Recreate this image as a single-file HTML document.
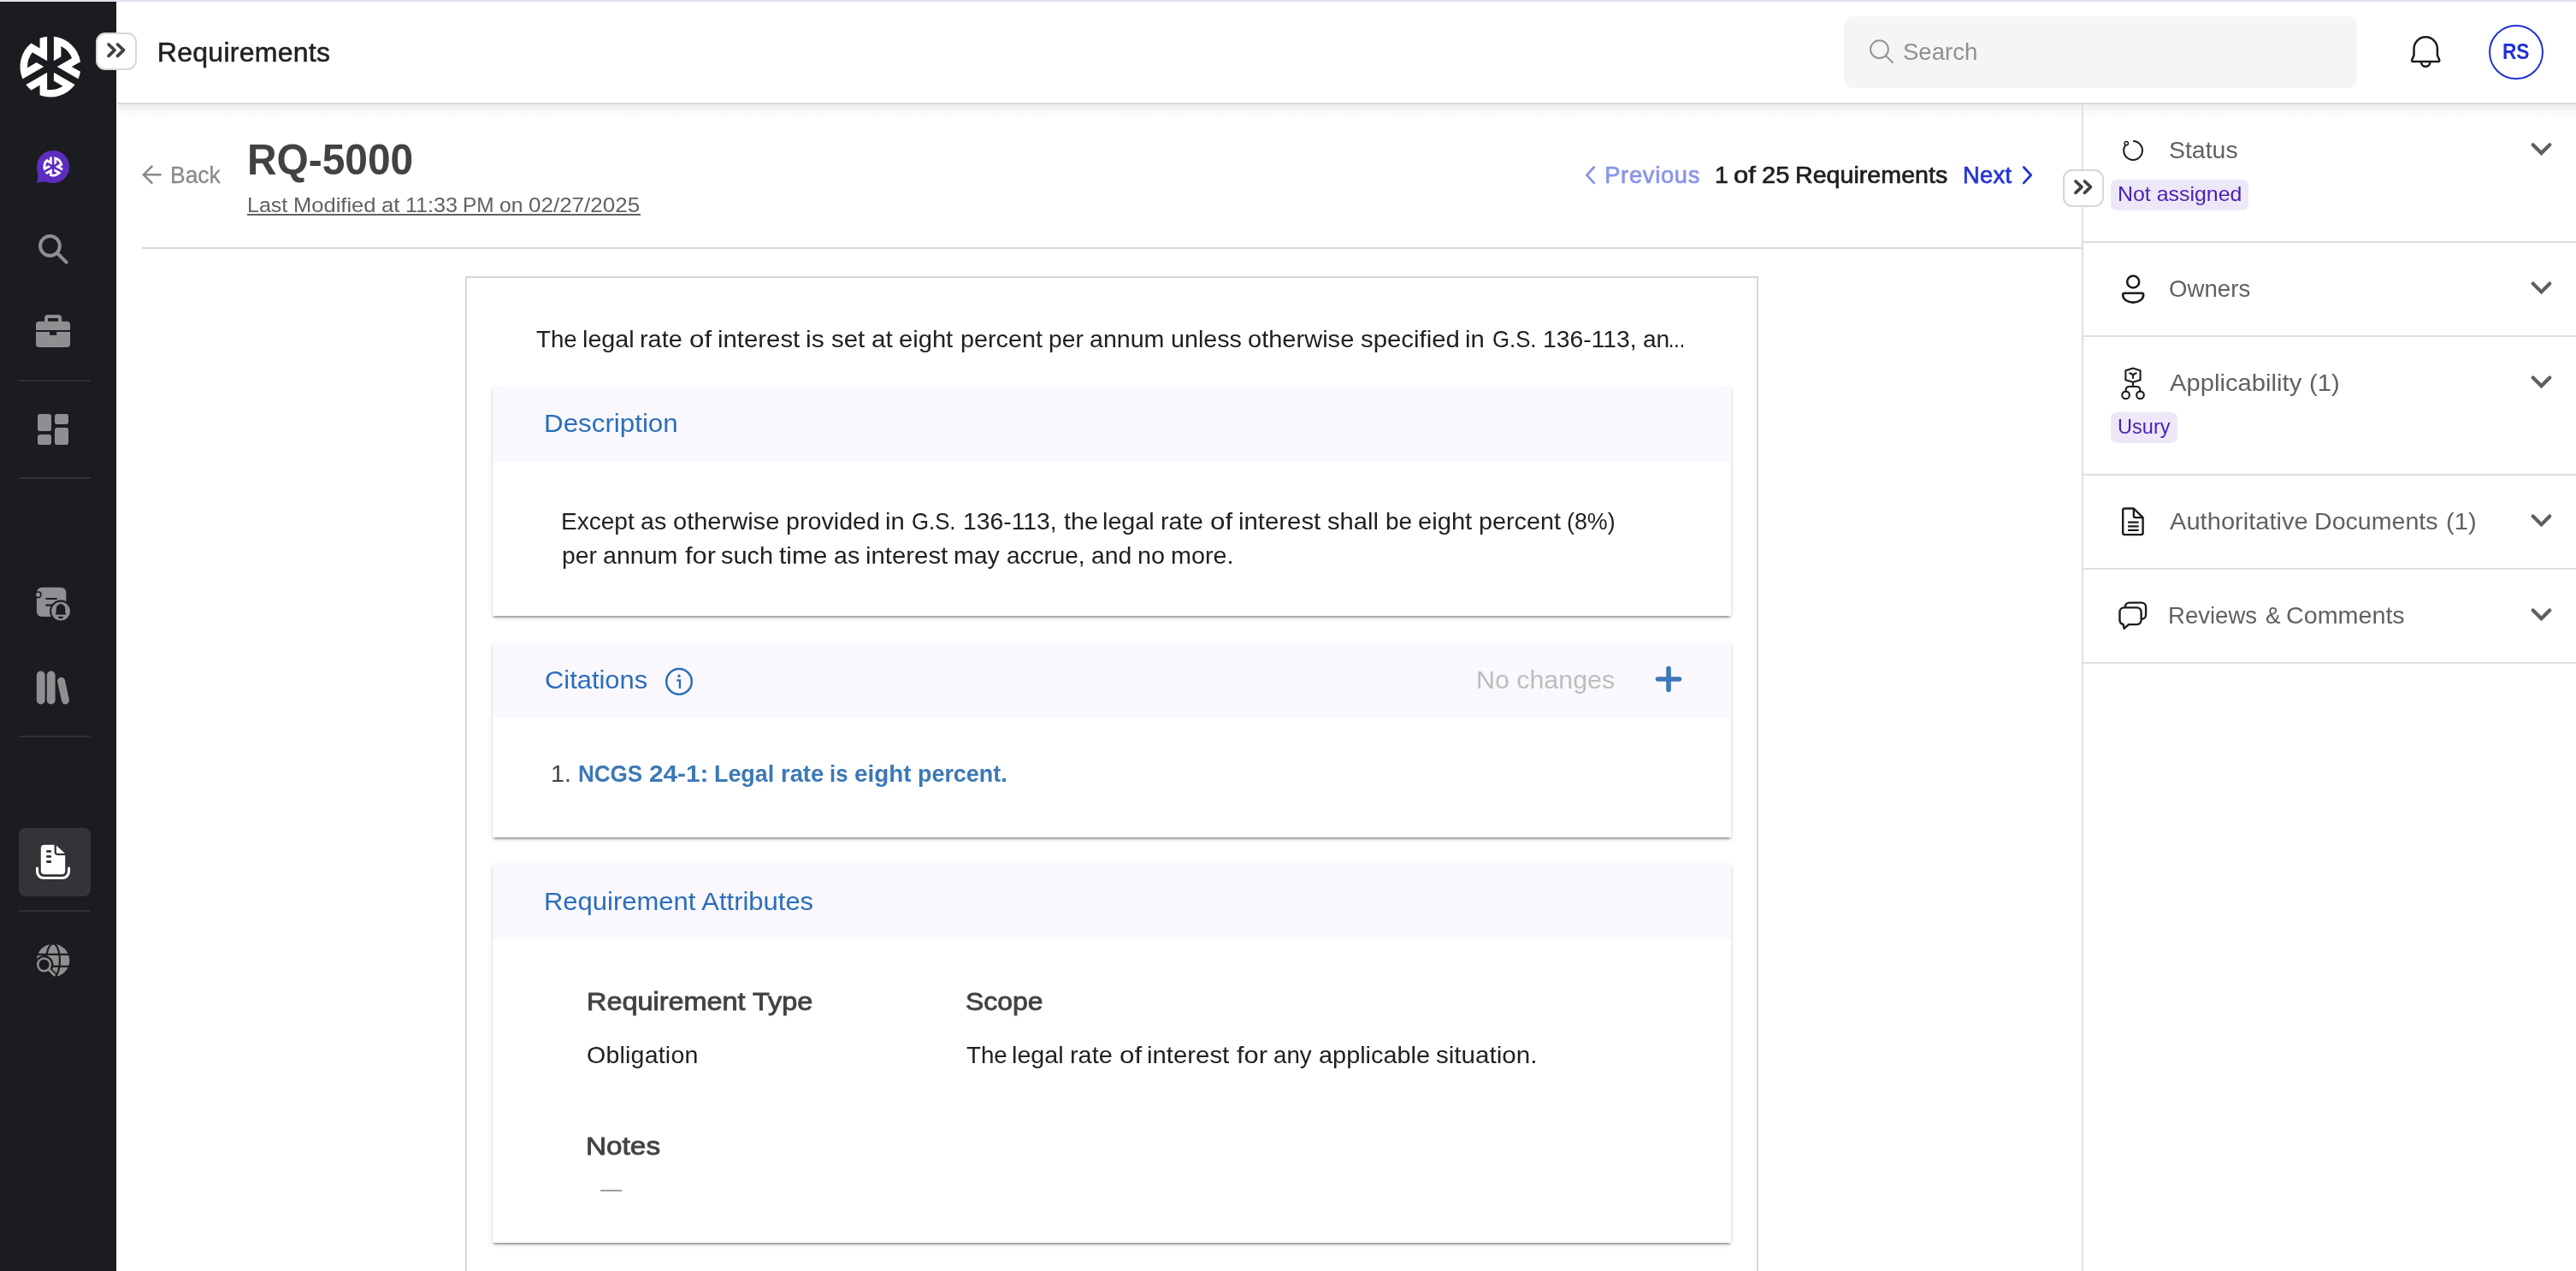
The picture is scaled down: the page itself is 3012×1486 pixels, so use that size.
<!DOCTYPE html>
<html lang="en">
<head>
<meta charset="utf-8">
<title>Requirements</title>
<style>
*{box-sizing:border-box;margin:0;padding:0}
html,body{width:3012px;height:1486px;overflow:hidden;background:#fff}
body{position:relative;font-family:"Liberation Sans",sans-serif;color:#212121}
.abs{position:absolute}
#texts{position:absolute;left:0;top:0;width:3012px;height:1486px;will-change:transform}
.t{position:absolute;white-space:nowrap;line-height:1}
.m{-webkit-text-stroke:0.55px currentColor}
svg{position:absolute;overflow:visible}
#strip{left:0;top:0;width:3012px;height:2px;background:#e4dfee}
#side{left:0;top:2px;width:136px;height:1484px;background:#1b1c1f;border-right:1px solid #131416}
#hdrline{left:137px;top:120px;width:2875px;height:2px;background:#d9d9d9}
#hdrshadow{left:137px;top:122px;width:2875px;height:18px;background:linear-gradient(to bottom,rgba(0,0,0,.07),rgba(0,0,0,.025) 45%,rgba(0,0,0,0))}
.sdiv{left:22px;width:84px;height:2px;background:#2f3033}
#active{left:22px;top:968px;width:84px;height:80px;border-radius:8px;background:#333437}
.btn{background:#fff;border:2px solid #d6d6d6;border-radius:11px}
#search{left:2156px;top:19px;width:600px;height:84px;background:#f5f5f5;border-radius:12px}
#avatar{left:2910px;top:29px;width:64px;height:64px;border:2px solid #2231d6;border-radius:50%}
#subdiv{left:166px;top:289px;width:2268px;height:2px;background:#d8d8d8}
#pborder{left:2434px;top:122px;width:2px;height:1364px;background:#e0e0e0}
.pdiv{left:2436px;width:576px;height:2px;background:#dedede}
#outer{left:544px;top:323px;width:1512px;height:1200px;border:2px solid #d6d6d6;background:#fff}
.card{left:576px;width:1448px;background:#fff;box-shadow:0 4px 2px -2px rgba(0,0,0,.2),0 2px 2px 0 rgba(0,0,0,.14),0 2px 6px 0 rgba(0,0,0,.12)}
.chead{position:absolute;left:0;top:0;width:100%;height:87px;background:#faf8fd}
.chip{background:#ede8f7;border-radius:7px}
#lmline{left:289.4px;top:250px;width:459.6px;height:2px;background:#616161}
#dash{left:702px;top:1391px;width:25px;height:2px;background:#9e9e9e}
</style>
</head>
<body>
<div id="strip" class="abs"></div>
<div id="side" class="abs"></div>
<div id="hdrshadow" class="abs"></div>
<div id="hdrline" class="abs"></div>

<!-- ===== sidebar ===== -->
<svg style="left:58.6px;top:78px" width="1" height="1"><g fill="#fff"><path d="M3.90 -35.28A35.50 35.50 0 0 1 35.01 -5.87L24.85 0.00L35.01 5.87A35.50 35.50 0 0 1 32.51 14.26L7.81 0.00L25.07 -9.97A26.98 26.98 0 0 0 12.42 -23.95L12.42 -11.68L3.90 -6.76Z"/><path d="M3.90 -35.28A35.50 35.50 0 0 1 35.01 -5.87L24.85 0.00L35.01 5.87A35.50 35.50 0 0 1 32.51 14.26L7.81 0.00L25.07 -9.97A26.98 26.98 0 0 0 12.42 -23.95L12.42 -11.68L3.90 -6.76Z" transform="rotate(120)"/><path d="M3.90 -35.28A35.50 35.50 0 0 1 35.01 -5.87L24.85 0.00L35.01 5.87A35.50 35.50 0 0 1 32.51 14.26L7.81 0.00L25.07 -9.97A26.98 26.98 0 0 0 12.42 -23.95L12.42 -11.68L3.90 -6.76Z" transform="rotate(240)"/></g></svg>
<svg style="left:0;top:0" width="136" height="1486" viewBox="0 0 136 1486">
 <!-- chat bubble -->
 <circle cx="62.05" cy="195" r="19.1" fill="#5c2dbf"/><path d="M43.1 196Q45.2 206 42.9 214.4Q49.5 211.3 58 213.6L58 200z" fill="#5c2dbf"/>
 <g transform="translate(62.05 194.9)" fill="#fff"><path d="M1.29 -11.63A11.70 11.70 0 0 1 11.54 -1.93L8.19 0.00L11.54 1.93A11.70 11.70 0 0 1 10.71 4.70L2.57 0.00L8.26 -3.28A8.89 8.89 0 0 0 4.09 -7.89L4.09 -3.85L1.29 -2.23Z"/><path d="M1.29 -11.63A11.70 11.70 0 0 1 11.54 -1.93L8.19 0.00L11.54 1.93A11.70 11.70 0 0 1 10.71 4.70L2.57 0.00L8.26 -3.28A8.89 8.89 0 0 0 4.09 -7.89L4.09 -3.85L1.29 -2.23Z" transform="rotate(120)"/><path d="M1.29 -11.63A11.70 11.70 0 0 1 11.54 -1.93L8.19 0.00L11.54 1.93A11.70 11.70 0 0 1 10.71 4.70L2.57 0.00L8.26 -3.28A8.89 8.89 0 0 0 4.09 -7.89L4.09 -3.85L1.29 -2.23Z" transform="rotate(240)"/></g>
 <!-- search -->
 <g fill="none" stroke="#8e8f91" stroke-width="4" stroke-linecap="round"><circle cx="58.45" cy="287.5" r="11.4"/><path d="M67 296L77.6 306.6"/></g>
 <!-- briefcase -->
 <rect x="54.03" y="369.95" width="16.1" height="10" rx="2" fill="none" stroke="#8e8f91" stroke-width="4"/><rect x="42" y="375.8" width="40.05" height="30.3" rx="4" fill="#8e8f91"/>
 <path d="M42 387h40.1" stroke="#1b1c1f" stroke-width="1.8"/><rect x="58.1" y="387" width="8" height="4.9" fill="#1b1c1f"/>
 <!-- dashboard -->
 <g fill="#8e8f91"><rect x="44" y="484" width="16" height="20" rx="2.8"/><rect x="64" y="484" width="16" height="12" rx="2.8"/><rect x="44" y="508" width="16" height="12" rx="2.8"/><rect x="64" y="500" width="16" height="20" rx="2.8"/></g>
 <!-- scroll + bell -->
 <rect x="42.9" y="686.8" width="34.5" height="34.1" rx="6" fill="#8e8f91"/>
 <circle cx="44.6" cy="695.3" r="4.1" fill="#1b1c1f"/><circle cx="44.6" cy="695.3" r="2.5" fill="#8e8f91"/>
 <path d="M54.3 700h11.6M54.3 707.7h6" stroke="#1b1c1f" stroke-width="2.2" stroke-linecap="round"/>
 <circle cx="71" cy="714.6" r="13" fill="#1b1c1f"/><circle cx="71" cy="714.6" r="10.9" fill="#8e8f91"/>
 <path d="M66 717.4v-5.8a5 5 0 0 1 10 0v5.8h1v0.9H65v-0.9z" fill="#1b1c1f" stroke="#1b1c1f" stroke-width="0.6" stroke-linejoin="round"/>
 <path d="M67.900 720.700h6.200a3.100 2.500 0 0 1-6.200 0z" fill="#1b1c1f"/>
 <!-- books -->
 <g fill="#8e8f91"><rect x="42.8" y="784.6" width="9.8" height="38.8" rx="4.9"/><rect x="54.8" y="784.6" width="9.8" height="38.8" rx="4.9"/></g>
 <path d="M71.6 796.3L76.5 818.9" stroke="#8e8f91" stroke-width="9" stroke-linecap="round"/>
</svg>
<div class="abs sdiv" style="top:444px"></div>
<div class="abs sdiv" style="top:558px"></div>
<div class="abs sdiv" style="top:860px"></div>
<div class="abs sdiv" style="top:1064px"></div>
<div id="active" class="abs"></div>
<svg style="left:0;top:0" width="136" height="1486" viewBox="0 0 136 1486">
 <!-- active doc icon -->
 <path d="M51.8 987.7H63.6V996.1a4 4 0 0 0 4 4H76.2V1018.2a4 4 0 0 1-4 4H51.8a4 4 0 0 1-4-4V991.7a4 4 0 0 1 4-4z" fill="#fff"/>
 <path d="M65.9 988.4L75.9 997.8H67.4a1.5 1.5 0 0 1-1.5-1.5z" fill="#fff"/>
 <path d="M55.4 995.4h3.4M55.4 1001.4h3.4M55.4 1007.5h3.4" stroke="#333437" stroke-width="2.8" stroke-linecap="round"/>
 <path d="M43.5 1015v4a7.500 7.500 0 0 0 7.500 7.500h22a7.500 7.500 0 0 0 7.500-7.500v-4" fill="none" stroke="#fff" stroke-width="3.1" stroke-linecap="round"/>
 <!-- globe search -->
 <circle cx="62" cy="1122.9" r="19.2" fill="#8e8f91"/>
 <g fill="none" stroke="#1b1c1f" stroke-width="2.2"><path d="M42 1115.8h40M42 1129.8h40"/><ellipse cx="62" cy="1122.9" rx="8" ry="19.6"/></g>
 <path d="M51.5 1128L66 1142.5V1147H40V1128z" fill="#1b1c1f"/><circle cx="51.5" cy="1127.9" r="10.9" fill="#1b1c1f"/>
 <path d="M57 1133.5L63.8 1140.3" stroke="#1b1c1f" stroke-width="6.4" stroke-linecap="round"/>
 <circle cx="51.5" cy="1127.9" r="7.3" fill="none" stroke="#8e8f91" stroke-width="2.5"/>
 <path d="M56.9 1133.4L63.4 1139.9" stroke="#8e8f91" stroke-width="2.9" stroke-linecap="round"/>
</svg>

<!-- ===== header ===== -->
<div class="abs btn" style="left:112px;top:38px;width:48px;height:44px"></div>
<div id="search" class="abs"></div>
<div id="avatar" class="abs"></div>
<svg style="left:0;top:0" width="3012" height="130" viewBox="0 0 3012 130">
 <path d="M127 52l7 6.7-7 6.7M137.5 52l7 6.7-7 6.7" fill="none" stroke="#424242" stroke-width="3.7" stroke-linecap="round" stroke-linejoin="round"/>
 <g fill="none" stroke="#949494" stroke-width="2"><circle cx="2197.5" cy="57.7" r="10.4"/><path d="M2205 65.3L2213.6 73.8"/></g>
 <path d="M2822.500 64.500V57a13.700 13.700 0 0 1 27.400 0v7.500l2.300 5.500a1.400 1.400 0 0 1-1.200 2H2821.400a1.400 1.400 0 0 1-1.200-2z" fill="none" stroke="#1c1c1c" stroke-width="2.5" stroke-linejoin="round"/>
 <path d="M2831 72.600a5.200 5.200 0 0 0 10.400 0" fill="none" stroke="#1c1c1c" stroke-width="2.5"/>
</svg>

<!-- ===== sub header ===== -->
<svg style="left:0;top:120px" width="2440" height="180" viewBox="0 120 2440 180">
 <path d="M178.260 193.800L167.800 204.250L178.260 214.700" fill="none" stroke="#888" stroke-width="2.500" stroke-linejoin="miter"/><path d="M168.500 204.250H187.500" fill="none" stroke="#888" stroke-width="2.500" stroke-linecap="round"/>
 <path d="M1863.8 195.5l-8.4 9.2 8.4 9.2" fill="none" stroke="#8a94e8" stroke-width="2.8" stroke-linecap="round" stroke-linejoin="round"/>
 <path d="M2366.3 195.5l8.4 9.2-8.4 9.2" fill="none" stroke="#2536d6" stroke-width="2.8" stroke-linecap="round" stroke-linejoin="round"/>
</svg>
<div id="subdiv" class="abs"></div>
<div id="lmline" class="abs"></div>

<!-- ===== main ===== -->
<div id="outer" class="abs"></div>
<div class="abs card" style="top:453px;height:267px"><div class="chead"></div></div>
<div class="abs card" style="top:752px;height:227px"><div class="chead"></div></div>
<div class="abs card" style="top:1011px;height:442px"><div class="chead"></div></div>
<svg style="left:0;top:760px" width="2100" height="80" viewBox="0 760 2100 80">
 <circle cx="794" cy="796.9" r="14.8" fill="none" stroke="#2a6ebb" stroke-width="2.5"/>
 <circle cx="794" cy="790.3" r="1.7" fill="#2a6ebb"/>
 <path d="M791.2 795.3h3.7v9.8" fill="none" stroke="#2a6ebb" stroke-width="2.3"/>
 <path d="M1951 781.5v25M1938.5 794h25" stroke="#3d78b8" stroke-width="5.6" stroke-linecap="round"/>
</svg>
<div id="dash" class="abs"></div>

<!-- ===== right panel ===== -->
<div id="pborder" class="abs"></div>
<div class="abs pdiv" style="top:282px"></div>
<div class="abs pdiv" style="top:392px"></div>
<div class="abs pdiv" style="top:554px"></div>
<div class="abs pdiv" style="top:664px"></div>
<div class="abs pdiv" style="top:774px"></div>
<div class="abs btn" style="left:2412px;top:198px;width:48px;height:44px"></div>
<div class="abs chip" style="left:2468px;top:210px;width:161px;height:36px"></div>
<div class="abs chip" style="left:2468px;top:482px;width:78px;height:36px"></div>
<svg style="left:2400px;top:120px" width="612" height="700" viewBox="2400 120 612 700">
 <path d="M2427 212l7 6.7-7 6.7M2437.5 212l7 6.7-7 6.7" fill="none" stroke="#424242" stroke-width="3.7" stroke-linecap="round" stroke-linejoin="round"/>
 <!-- status -->
 <path d="M2494.1 165.1a10.9 10.9 0 1 1 -8.6 4.2" fill="none" stroke="#1c1c1c" stroke-width="2"/>
 <circle cx="2486.3" cy="167.6" r="2.2" fill="none" stroke="#1c1c1c" stroke-width="1.5"/>
 <!-- owners -->
 <circle cx="2494.2" cy="329.5" r="7" fill="none" stroke="#1c1c1c" stroke-width="2.6"/>
 <path d="M2484.2 342.8h20a2 2 0 0 1 2 2c0 5-5 8.8-12 8.8s-12-3.800-12-8.800a2 2 0 0 1 2-2z" fill="none" stroke="#1c1c1c" stroke-width="2.6"/>
 <!-- applicability -->
 <g fill="none" stroke="#1c1c1c" stroke-width="2.1" stroke-linejoin="round" stroke-linecap="round">
  <path d="M2494 430.6l8.600 2.600v11l-8.600 2.600-8.600-2.600v-11z"/>
  <path d="M2490.300 436.400q1.900 0 3.700 2.200 1.800-2.200 3.700-2.200M2494 438.600v3.400"/>
  <path d="M2494 447v5M2485.700 457.300v-1.800a3.500 3.500 0 0 1 3.500-3.500h9.600a3.500 3.500 0 0 1 3.500 3.500v1.800"/>
  <circle cx="2485.600" cy="461.900" r="4.300"/><circle cx="2502.500" cy="461.900" r="4.300"/>
 </g>
 <!-- doc -->
 <g fill="none" stroke="#1c1c1c" stroke-width="2.4" stroke-linejoin="round">
  <path d="M2484.200 594.500h10.700l10.700 10.600v18a2 2 0 0 1-2 2h-19.400a2 2 0 0 1-2-2v-26.600a2 2 0 0 1 2-2z"/>
  <path d="M2494.900 594.500v8.600a2 2 0 0 0 2 2h8.700"/>
  <path d="M2488 610.600h12.600M2488 615.300h12.600M2488 619.900h12.600" stroke-width="2.200"/>
 </g>
 <!-- comments -->
 <g fill="#fff" stroke="#1c1c1c" stroke-width="2.400" stroke-linejoin="round">
  <rect x="2484.800" y="704.600" width="24.300" height="19.200" rx="5"/>
  <path d="M2483.500 710.400h15.100a5 5 0 0 1 5 5v9.700a5 5 0 0 1-5 5h-9.600l-5.400 4.800-0.900-4.900a5 5 0 0 1-4.200-4.900v-9.700a5 5 0 0 1 5-5z"/>
 </g>
 <!-- chevrons -->
 <g fill="none" stroke="#5f5f5f" stroke-width="4.200" stroke-linecap="round" stroke-linejoin="miter">
  <path d="M2961.700 169.200l9.800 9.800 9.800-9.800"/>
  <path d="M2961.700 331.600l9.800 9.800 9.800-9.800"/>
  <path d="M2961.700 441.400l9.800 9.800 9.800-9.800"/>
  <path d="M2961.700 603.600l9.800 9.800 9.800-9.800"/>
  <path d="M2961.700 713.400l9.800 9.800 9.800-9.800"/>
 </g>
</svg>

<div id="texts">
<div class="t m" id="t_req" style="left:183.80px;top:45.05px;font-size:32px;letter-spacing:0.273px;color:#212121;">Requirements</div>
<div class="t" id="t_back" style="left:198.50px;top:190.03px;font-size:28.5px;transform:scaleX(0.9287);transform-origin:0 0;color:#8a8a8a;-webkit-text-stroke:0.3px currentColor;">Back</div>
<div class="t" id="t_rq" style="left:289.00px;top:162.51px;font-size:49.1px;transform:scaleX(0.9745);transform-origin:0 0;color:#424242;font-weight:bold;">RQ-5000</div>
<div class="t" id="t_lastm_0" style="left:288.50px;top:228.18px;font-size:24.5px;transform:scaleX(1.0194);transform-origin:0 0;color:#616161;">Last</div>
<div class="t" id="t_lastm_1" style="left:342.50px;top:228.18px;font-size:24.5px;transform:scaleX(1.0416);transform-origin:0 0;color:#616161;">Modified</div>
<div class="t" id="t_lastm_2" style="left:446.00px;top:228.18px;font-size:24.5px;transform:scaleX(1.0475);transform-origin:0 0;color:#616161;">at</div>
<div class="t" id="t_lastm_3" style="left:474.25px;top:228.18px;font-size:24.5px;transform:scaleX(1.0253);transform-origin:0 0;color:#616161;">11:33</div>
<div class="t" id="t_lastm_4" style="left:540.50px;top:228.18px;font-size:24.5px;transform:scaleX(0.9961);transform-origin:0 0;color:#616161;">PM</div>
<div class="t" id="t_lastm_5" style="left:584.00px;top:228.18px;font-size:24.5px;transform:scaleX(1.0065);transform-origin:0 0;color:#616161;">on</div>
<div class="t" id="t_lastm_6" style="left:617.75px;top:228.18px;font-size:24.5px;transform:scaleX(1.0615);transform-origin:0 0;color:#616161;">02/27/2025</div>
<div class="t m" id="t_prev" style="left:1876.20px;top:191.10px;font-size:27.3px;letter-spacing:0.714px;color:#8a94e8;-webkit-text-stroke-width:0.7px;">Previous</div>
<div class="t m" id="t_count_0" style="left:2004.60px;top:191.10px;font-size:27.3px;transform:scaleX(1.0404);transform-origin:0 0;color:#1f1f1f;-webkit-text-stroke-width:0.7px;">1</div>
<div class="t m" id="t_count_1" style="left:2026.90px;top:191.10px;font-size:27.3px;transform:scaleX(1.1333);transform-origin:0 0;color:#1f1f1f;-webkit-text-stroke-width:0.7px;">of</div>
<div class="t m" id="t_count_2" style="left:2060.20px;top:191.10px;font-size:27.3px;transform:scaleX(1.0667);transform-origin:0 0;color:#1f1f1f;-webkit-text-stroke-width:0.7px;">25</div>
<div class="t m" id="t_count_3" style="left:2099.30px;top:191.10px;font-size:27.3px;transform:scaleX(1.0492);transform-origin:0 0;color:#1f1f1f;-webkit-text-stroke-width:0.7px;">Requirements</div>
<div class="t m" id="t_next" style="left:2295.00px;top:191.10px;font-size:27.3px;letter-spacing:0.333px;color:#2536d6;-webkit-text-stroke-width:0.75px;">Next</div>
<div class="t" id="t_search" style="left:2224.60px;top:45.62px;font-size:28.5px;transform:scaleX(0.9659);transform-origin:0 0;color:#909090;">Search</div>
<div class="t" id="t_rs" style="left:2926.00px;top:46.90px;font-size:26px;transform:scaleX(0.8716);transform-origin:0 0;color:#2231d6;font-weight:bold;">RS</div>
<div class="t" id="t_title_0" style="left:627.00px;top:382.02px;font-size:28.5px;transform:scaleX(0.9720);transform-origin:0 0;color:#212121;">The</div>
<div class="t" id="t_title_1" style="left:680.50px;top:382.02px;font-size:28.5px;transform:scaleX(1.0076);transform-origin:0 0;color:#212121;">legal</div>
<div class="t" id="t_title_2" style="left:748.00px;top:382.02px;font-size:28.5px;transform:scaleX(1.0125);transform-origin:0 0;color:#212121;">rate</div>
<div class="t" id="t_title_3" style="left:806.00px;top:382.02px;font-size:28.5px;transform:scaleX(1.1023);transform-origin:0 0;color:#212121;">of</div>
<div class="t" id="t_title_4" style="left:839.00px;top:382.02px;font-size:28.5px;transform:scaleX(1.0294);transform-origin:0 0;color:#212121;">interest</div>
<div class="t" id="t_title_5" style="left:942.00px;top:382.02px;font-size:28.5px;transform:scaleX(1.0565);transform-origin:0 0;color:#212121;">is</div>
<div class="t" id="t_title_6" style="left:971.50px;top:382.02px;font-size:28.5px;transform:scaleX(1.0309);transform-origin:0 0;color:#212121;">set</div>
<div class="t" id="t_title_7" style="left:1018.50px;top:382.02px;font-size:28.5px;transform:scaleX(1.0472);transform-origin:0 0;color:#212121;">at</div>
<div class="t" id="t_title_8" style="left:1051.00px;top:382.02px;font-size:28.5px;transform:scaleX(1.0228);transform-origin:0 0;color:#212121;">eight</div>
<div class="t" id="t_title_9" style="left:1122.75px;top:382.02px;font-size:28.5px;transform:scaleX(1.0092);transform-origin:0 0;color:#212121;">percent</div>
<div class="t" id="t_title_10" style="left:1225.75px;top:382.02px;font-size:28.5px;transform:scaleX(0.9903);transform-origin:0 0;color:#212121;">per</div>
<div class="t" id="t_title_11" style="left:1273.50px;top:382.02px;font-size:28.5px;transform:scaleX(1.0030);transform-origin:0 0;color:#212121;">annum</div>
<div class="t" id="t_title_12" style="left:1369.00px;top:382.02px;font-size:28.5px;transform:scaleX(1.0070);transform-origin:0 0;color:#212121;">unless</div>
<div class="t" id="t_title_13" style="left:1459.00px;top:382.02px;font-size:28.5px;transform:scaleX(1.0190);transform-origin:0 0;color:#212121;">otherwise</div>
<div class="t" id="t_title_14" style="left:1591.00px;top:382.02px;font-size:28.5px;transform:scaleX(1.0307);transform-origin:0 0;color:#212121;">specified</div>
<div class="t" id="t_title_15" style="left:1712.90px;top:382.02px;font-size:28.5px;transform:scaleX(1.0262);transform-origin:0 0;color:#212121;">in</div>
<div class="t" id="t_title_16" style="left:1745.10px;top:382.02px;font-size:28.5px;transform:scaleX(0.9028);transform-origin:0 0;color:#212121;">G.S.</div>
<div class="t" id="t_title_17" style="left:1803.80px;top:382.02px;font-size:28.5px;transform:scaleX(0.9932);transform-origin:0 0;color:#212121;">136-113,</div>
<div class="t" id="t_title_18" style="left:1920.70px;top:382.02px;font-size:28.5px;transform:scaleX(0.9843);transform-origin:0 0;color:#212121;">an</div>
<div class="t" id="t_title_19" style="left:1950.80px;top:382.02px;font-size:28.5px;transform:scaleX(0.7980);transform-origin:0 0;color:#212121;">...</div>
<div class="t" id="t_desc" style="left:635.50px;top:480.25px;font-size:29.7px;transform:scaleX(1.0554);transform-origin:0 0;color:#2a6ebb;">Description</div>
<div class="t" id="t_body1_0" style="left:655.50px;top:594.77px;font-size:28.5px;transform:scaleX(0.9837);transform-origin:0 0;color:#212121;">Except</div>
<div class="t" id="t_body1_1" style="left:749.00px;top:594.77px;font-size:28.5px;transform:scaleX(1.0028);transform-origin:0 0;color:#212121;">as</div>
<div class="t" id="t_body1_2" style="left:786.50px;top:594.77px;font-size:28.5px;transform:scaleX(1.0190);transform-origin:0 0;color:#212121;">otherwise</div>
<div class="t" id="t_body1_3" style="left:919.00px;top:594.77px;font-size:28.5px;transform:scaleX(1.0064);transform-origin:0 0;color:#212121;">provided</div>
<div class="t" id="t_body1_4" style="left:1035.00px;top:594.77px;font-size:28.5px;transform:scaleX(1.0262);transform-origin:0 0;color:#212121;">in</div>
<div class="t" id="t_body1_5" style="left:1066.00px;top:594.77px;font-size:28.5px;transform:scaleX(0.9028);transform-origin:0 0;color:#212121;">G.S.</div>
<div class="t" id="t_body1_6" style="left:1126.00px;top:594.77px;font-size:28.5px;transform:scaleX(0.9932);transform-origin:0 0;color:#212121;">136-113,</div>
<div class="t" id="t_body1_7" style="left:1243.75px;top:594.77px;font-size:28.5px;transform:scaleX(1.0142);transform-origin:0 0;color:#212121;">the</div>
<div class="t" id="t_body1_8" style="left:1289.25px;top:594.77px;font-size:28.5px;transform:scaleX(1.0076);transform-origin:0 0;color:#212121;">legal</div>
<div class="t" id="t_body1_9" style="left:1356.75px;top:594.77px;font-size:28.5px;transform:scaleX(1.0125);transform-origin:0 0;color:#212121;">rate</div>
<div class="t" id="t_body1_10" style="left:1414.75px;top:594.77px;font-size:28.5px;transform:scaleX(1.1023);transform-origin:0 0;color:#212121;">of</div>
<div class="t" id="t_body1_11" style="left:1447.50px;top:594.77px;font-size:28.5px;transform:scaleX(1.0294);transform-origin:0 0;color:#212121;">interest</div>
<div class="t" id="t_body1_12" style="left:1551.50px;top:594.77px;font-size:28.5px;transform:scaleX(1.0234);transform-origin:0 0;color:#212121;">shall</div>
<div class="t" id="t_body1_13" style="left:1620.25px;top:594.77px;font-size:28.5px;transform:scaleX(0.9800);transform-origin:0 0;color:#212121;">be</div>
<div class="t" id="t_body1_14" style="left:1657.75px;top:594.77px;font-size:28.5px;transform:scaleX(1.0228);transform-origin:0 0;color:#212121;">eight</div>
<div class="t" id="t_body1_15" style="left:1729.00px;top:594.77px;font-size:28.5px;transform:scaleX(1.0092);transform-origin:0 0;color:#212121;">percent</div>
<div class="t" id="t_body1_16" style="left:1831.50px;top:594.77px;font-size:28.5px;transform:scaleX(0.9402);transform-origin:0 0;color:#212121;">(8%)</div>
<div class="t" id="t_body2_0" style="left:656.50px;top:634.77px;font-size:28.5px;transform:scaleX(0.9904);transform-origin:0 0;color:#212121;">per</div>
<div class="t" id="t_body2_1" style="left:704.50px;top:634.77px;font-size:28.5px;transform:scaleX(1.0030);transform-origin:0 0;color:#212121;">annum</div>
<div class="t" id="t_body2_2" style="left:800.50px;top:634.77px;font-size:28.5px;transform:scaleX(1.0808);transform-origin:0 0;color:#212121;">for</div>
<div class="t" id="t_body2_3" style="left:842.75px;top:634.77px;font-size:28.5px;transform:scaleX(1.0133);transform-origin:0 0;color:#212121;">such</div>
<div class="t" id="t_body2_4" style="left:911.25px;top:634.77px;font-size:28.5px;transform:scaleX(1.0469);transform-origin:0 0;color:#212121;">time</div>
<div class="t" id="t_body2_5" style="left:974.75px;top:634.77px;font-size:28.5px;transform:scaleX(1.0028);transform-origin:0 0;color:#212121;">as</div>
<div class="t" id="t_body2_6" style="left:1011.75px;top:634.77px;font-size:28.5px;transform:scaleX(1.0294);transform-origin:0 0;color:#212121;">interest</div>
<div class="t" id="t_body2_7" style="left:1115.00px;top:634.77px;font-size:28.5px;transform:scaleX(0.9993);transform-origin:0 0;color:#212121;">may</div>
<div class="t" id="t_body2_8" style="left:1177.00px;top:634.77px;font-size:28.5px;transform:scaleX(0.9802);transform-origin:0 0;color:#212121;">accrue,</div>
<div class="t" id="t_body2_9" style="left:1276.00px;top:634.77px;font-size:28.5px;transform:scaleX(0.9936);transform-origin:0 0;color:#212121;">and</div>
<div class="t" id="t_body2_10" style="left:1329.70px;top:634.77px;font-size:28.5px;transform:scaleX(1.0076);transform-origin:0 0;color:#212121;">no</div>
<div class="t" id="t_body2_11" style="left:1369.00px;top:634.77px;font-size:28.5px;transform:scaleX(1.0088);transform-origin:0 0;color:#212121;">more.</div>
<div class="t" id="t_cit" style="left:636.50px;top:779.75px;font-size:29.7px;transform:scaleX(1.0398);transform-origin:0 0;color:#2a6ebb;">Citations</div>
<div class="t" id="t_nochg" style="left:1726.20px;top:779.75px;font-size:29.7px;transform:scaleX(1.0234);transform-origin:0 0;color:#bdbdbd;">No changes</div>
<div class="t" id="t_one" style="left:644.00px;top:890.38px;font-size:28.5px;transform:scaleX(1.0058);transform-origin:0 0;color:#424242;">1.</div>
<div class="t" id="t_link_0" style="left:676.00px;top:890.80px;font-size:28px;transform:scaleX(0.9295);transform-origin:0 0;color:#3b78b6;font-weight:bold;">NCGS</div>
<div class="t" id="t_link_1" style="left:758.50px;top:890.80px;font-size:28px;transform:scaleX(1.0623);transform-origin:0 0;color:#3b78b6;font-weight:bold;">24-1:</div>
<div class="t" id="t_link_2" style="left:835.25px;top:890.80px;font-size:28px;transform:scaleX(0.9598);transform-origin:0 0;color:#3b78b6;font-weight:bold;">Legal</div>
<div class="t" id="t_link_3" style="left:912.75px;top:890.80px;font-size:28px;transform:scaleX(0.9771);transform-origin:0 0;color:#3b78b6;font-weight:bold;">rate</div>
<div class="t" id="t_link_4" style="left:970.25px;top:890.80px;font-size:28px;transform:scaleX(0.9182);transform-origin:0 0;color:#3b78b6;font-weight:bold;">is</div>
<div class="t" id="t_link_5" style="left:999.00px;top:890.80px;font-size:28px;transform:scaleX(0.9934);transform-origin:0 0;color:#3b78b6;font-weight:bold;">eight</div>
<div class="t" id="t_link_6" style="left:1072.75px;top:890.80px;font-size:28px;transform:scaleX(0.9606);transform-origin:0 0;color:#3b78b6;font-weight:bold;">percent.</div>
<div class="t" id="t_attr" style="left:635.50px;top:1039.26px;font-size:29.7px;transform:scaleX(1.0435);transform-origin:0 0;color:#2a6ebb;">Requirement Attributes</div>
<div class="t m" id="t_rtype" style="left:685.50px;top:1155.90px;font-size:30px;transform:scaleX(1.0806);transform-origin:0 0;color:#424242;-webkit-text-stroke-width:0.85px;">Requirement Type</div>
<div class="t m" id="t_scope" style="left:1128.50px;top:1155.90px;font-size:30px;transform:scaleX(1.0652);transform-origin:0 0;color:#424242;-webkit-text-stroke-width:0.85px;">Scope</div>
<div class="t" id="t_oblig" style="left:686.00px;top:1218.78px;font-size:28.5px;letter-spacing:0.222px;color:#212121;">Obligation</div>
<div class="t" id="t_sval_0" style="left:1129.50px;top:1218.78px;font-size:28.5px;transform:scaleX(0.9720);transform-origin:0 0;color:#212121;">The</div>
<div class="t" id="t_sval_1" style="left:1183.00px;top:1218.78px;font-size:28.5px;transform:scaleX(1.0076);transform-origin:0 0;color:#212121;">legal</div>
<div class="t" id="t_sval_2" style="left:1250.50px;top:1218.78px;font-size:28.5px;transform:scaleX(1.0125);transform-origin:0 0;color:#212121;">rate</div>
<div class="t" id="t_sval_3" style="left:1308.50px;top:1218.78px;font-size:28.5px;transform:scaleX(1.1023);transform-origin:0 0;color:#212121;">of</div>
<div class="t" id="t_sval_4" style="left:1341.25px;top:1218.78px;font-size:28.5px;transform:scaleX(1.0294);transform-origin:0 0;color:#212121;">interest</div>
<div class="t" id="t_sval_5" style="left:1446.25px;top:1218.78px;font-size:28.5px;transform:scaleX(1.0808);transform-origin:0 0;color:#212121;">for</div>
<div class="t" id="t_sval_6" style="left:1489.00px;top:1218.78px;font-size:28.5px;transform:scaleX(0.9731);transform-origin:0 0;color:#212121;">any</div>
<div class="t" id="t_sval_7" style="left:1541.50px;top:1218.78px;font-size:28.5px;transform:scaleX(1.0134);transform-origin:0 0;color:#212121;">applicable</div>
<div class="t" id="t_sval_8" style="left:1679.00px;top:1218.78px;font-size:28.5px;transform:scaleX(1.0379);transform-origin:0 0;color:#212121;">situation.</div>
<div class="t m" id="t_notes" style="left:685.30px;top:1324.50px;font-size:30px;transform:scaleX(1.1109);transform-origin:0 0;color:#424242;-webkit-text-stroke-width:0.85px;">Notes</div>
<div class="t" id="t_status" style="left:2536.20px;top:160.62px;font-size:28.5px;transform:scaleX(0.9979);transform-origin:0 0;color:#616161;">Status</div>
<div class="t" id="t_nota" style="left:2475.50px;top:215.30px;font-size:24px;transform:scaleX(1.0378);transform-origin:0 0;color:#4b1fb5;">Not assigned</div>
<div class="t" id="t_owners" style="left:2536.20px;top:323.47px;font-size:28.5px;transform:scaleX(0.9697);transform-origin:0 0;color:#616161;">Owners</div>
<div class="t" id="t_appl_0" style="left:2537.00px;top:433.38px;font-size:28.5px;transform:scaleX(1.0249);transform-origin:0 0;color:#616161;">Applicability</div>
<div class="t" id="t_appl_1" style="left:2700.00px;top:433.38px;font-size:28.5px;transform:scaleX(1.0225);transform-origin:0 0;color:#616161;">(1)</div>
<div class="t" id="t_usury" style="left:2476.00px;top:487.30px;font-size:24px;transform:scaleX(0.9820);transform-origin:0 0;color:#4b1fb5;">Usury</div>
<div class="t" id="t_auth_0" style="left:2536.80px;top:594.57px;font-size:28.5px;transform:scaleX(1.0214);transform-origin:0 0;color:#616161;">Authoritative</div>
<div class="t" id="t_auth_1" style="left:2705.70px;top:594.57px;font-size:28.5px;transform:scaleX(1.0032);transform-origin:0 0;color:#616161;">Documents</div>
<div class="t" id="t_auth_2" style="left:2859.90px;top:594.57px;font-size:28.5px;transform:scaleX(1.0225);transform-origin:0 0;color:#616161;">(1)</div>
<div class="t" id="t_rev_0" style="left:2535.20px;top:704.67px;font-size:28.5px;transform:scaleX(0.9668);transform-origin:0 0;color:#616161;">Reviews</div>
<div class="t" id="t_rev_1" style="left:2648.80px;top:704.67px;font-size:28.5px;transform:scaleX(0.9257);transform-origin:0 0;color:#616161;">&amp;</div>
<div class="t" id="t_rev_2" style="left:2672.90px;top:704.67px;font-size:28.5px;transform:scaleX(1.0068);transform-origin:0 0;color:#616161;">Comments</div>
</div>
<script>(function(){var w=window.innerWidth;if(w&&Math.abs(w-3012)>4){document.documentElement.style.zoom=String(w/3012);}})();</script>
</body>
</html>
